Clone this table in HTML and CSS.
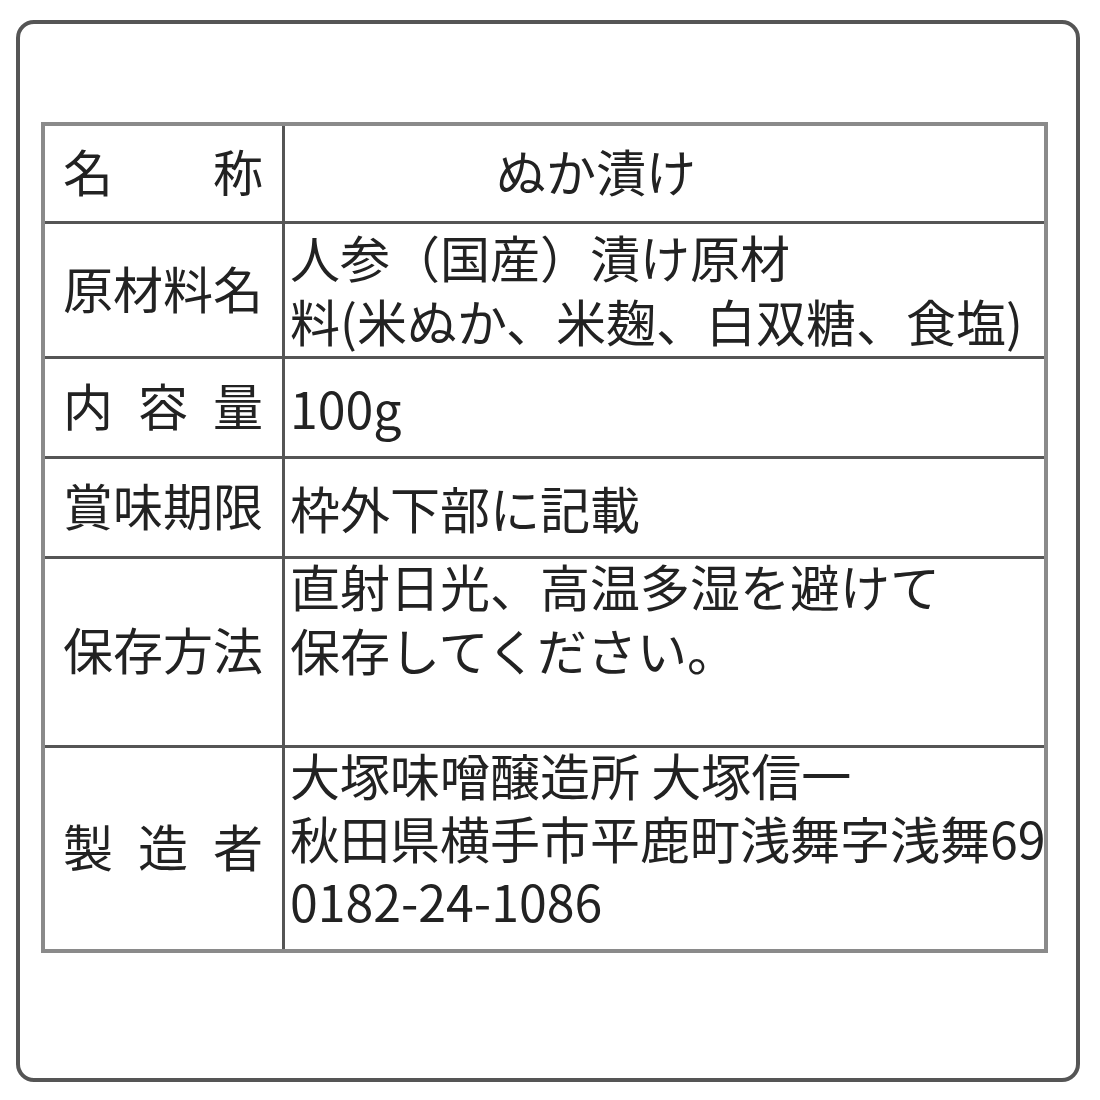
FILE: index.html
```html
<!DOCTYPE html>
<html lang="ja">
<head>
<meta charset="utf-8">
<title>ぬか漬け</title>
<link rel="stylesheet" href="styles.css">
</head>
<body>
<div class="label-box">
  <div class="spec">
    <div class="row r1">
      <div class="key"><span>名</span><span>称</span></div>
      <div class="val name">ぬか漬け</div>
    </div>
    <div class="row r2">
      <div class="key"><span>原</span><span>材</span><span>料</span><span>名</span></div>
      <div class="val mid"><div class="ln">人参（国産）漬け原材</div><div class="ln">料(米ぬか、米麹、白双糖、食塩)</div></div>
    </div>
    <div class="row r3">
      <div class="key"><span>内</span><span>容</span><span>量</span></div>
      <div class="val mid">100g</div>
    </div>
    <div class="row r4">
      <div class="key"><span>賞</span><span>味</span><span>期</span><span>限</span></div>
      <div class="val mid">枠外下部に記載</div>
    </div>
    <div class="row r5">
      <div class="key"><span>保</span><span>存</span><span>方</span><span>法</span></div>
      <div class="val top"><div class="ln">直射日光、高温多湿を避けて</div><div class="ln">保存してください。</div></div>
    </div>
    <div class="row r6">
      <div class="key"><span>製</span><span>造</span><span>者</span></div>
      <div class="val top tight"><div class="ln">大塚味噌醸造所 大塚信一</div><div class="ln">秋田県横手市平鹿町浅舞字浅舞69</div><div class="ln">0182-24-1086</div></div>
    </div>
  </div>
</div>
</body>
</html>
```

FILE: styles.css
```css
html, body {
  margin: 0;
  padding: 0;
  background: #ffffff;
}

body {
  font-family: "Noto Sans CJK JP", "Noto Sans", sans-serif;
  color: #222222;
}

.label-box {
  box-sizing: border-box;
  margin: 20px 0 0 16px;
  width: 1064px;
  height: 1062px;
  border: 4px solid #555555;
  border-radius: 18px;
  padding: 98px 0 0 21px;
}

.spec {
  box-sizing: border-box;
  width: 1007px;
  border: 4px solid #8a8a8a;
  display: flex;
  flex-direction: column;
}

.row {
  box-sizing: border-box;
  display: grid;
  grid-template-columns: 240px 1fr;
  border-bottom: 3px solid #555555;
}

.row.r6 {
  border-bottom: none;
}

.r1 { height: 98px; }
.r2 { height: 135px; }
.r3 { height: 100px; }
.r4 { height: 100px; }
.r5 { height: 189px; }
.r6 { height: 201px; }

.key {
  box-sizing: border-box;
  border-right: 3px solid #555555;
  padding: 0 19px 8px 18px;
  display: flex;
  justify-content: space-between;
  align-items: center;
  font-size: 50px;
  line-height: 64px;
}

.val {
  box-sizing: border-box;
  font-size: 50px;
  line-height: 64px;
  padding-left: 5px;
  white-space: nowrap;
}

.ln {
  height: 64px;
}

.val.name {
  display: flex;
  align-items: center;
  padding-left: 211px;
  padding-bottom: 8px;
}

.val.mid {
  display: flex;
  flex-direction: column;
  justify-content: center;
  padding-bottom: 6px;
}

.r3 .val.mid,
.r4 .val.mid {
  padding-bottom: 2px;
}

.val.top {
  margin-top: -6px;
}

.val.tight {
  margin-top: -5px;
}

.val.tight .ln {
  height: 63px;
  line-height: 63px;
}
```
